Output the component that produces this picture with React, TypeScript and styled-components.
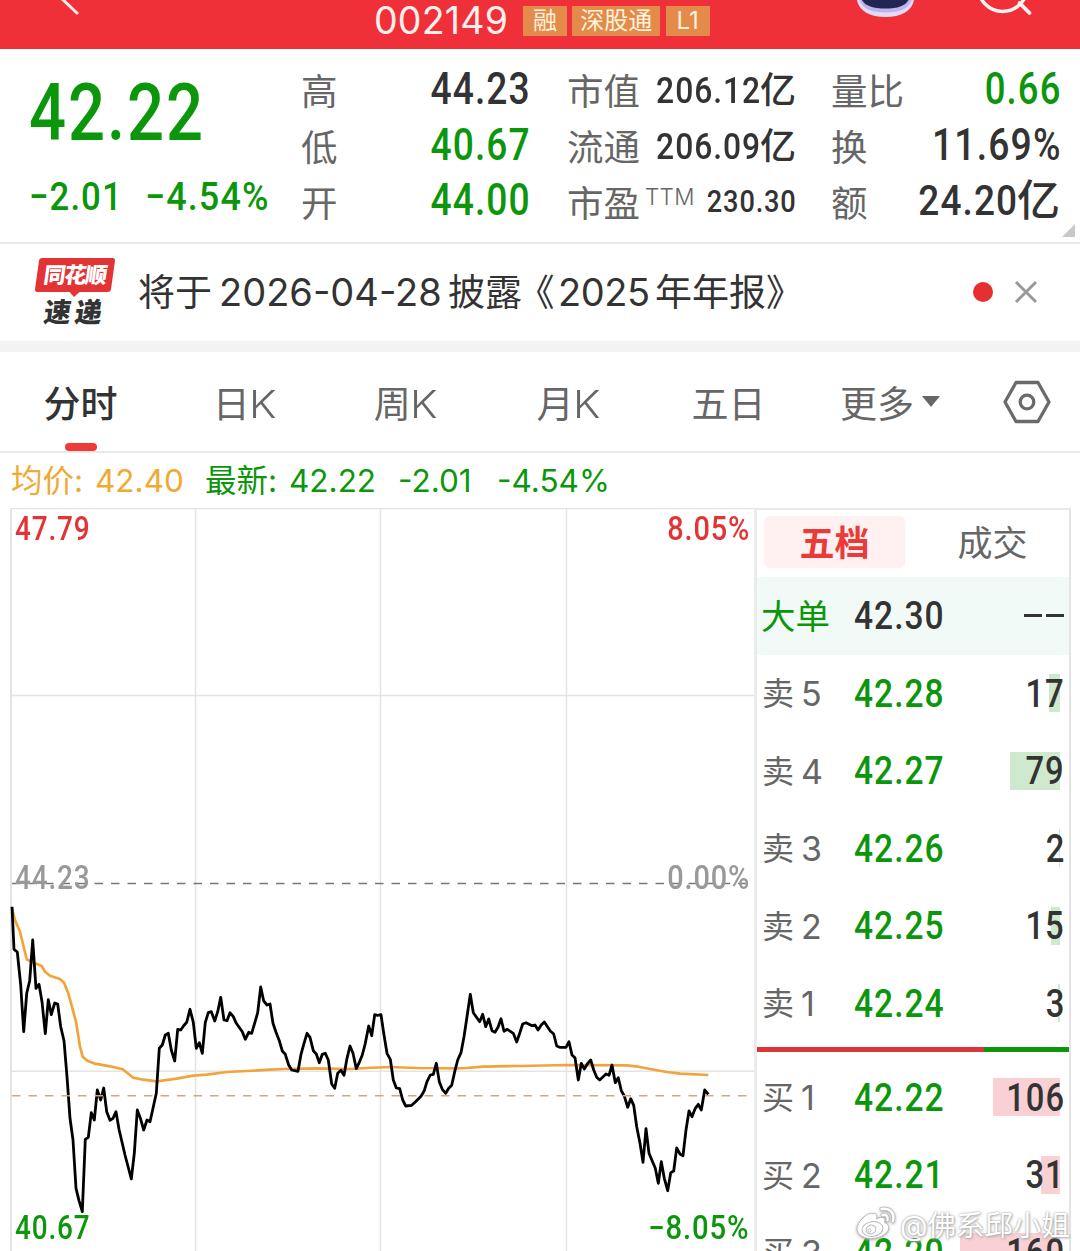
import React from "react";
import styled, { createGlobalStyle } from "styled-components";

const GREEN = "#0c960c";
const RED = "#e33335";
const INK = "#333";
const MUTED = "#666";
const LINE = "#e9e9e9";

const Global = createGlobalStyle`
  *, *::before, *::after { box-sizing: border-box; }
  html, body { margin: 0; background: #fff; }
  body { font-family: Inter, "Noto Sans CJK SC", sans-serif; color: ${INK}; }
`;

const Screen = styled.main`
  position: relative;
  width: 1080px;
  height: 1251px;
  overflow: hidden;
  display: flex;
  flex-direction: column;
  background: #fff;
`;

/* Narrow numerals used for prices and volumes */
const Num = styled.span<{ $size: number; $color?: string; $x?: number; $dy?: number; $origin?: string }>`
  display: inline-block;
  font-family: Roboto, "Noto Sans CJK SC", sans-serif;
  font-size: ${(p) => p.$size}px;
  font-weight: 500;
  line-height: 1;
  letter-spacing: 0.03em;
  margin-right: -0.03em;
  white-space: nowrap;
  color: ${(p) => p.$color ?? INK};
  transform: translateY(${(p) => p.$dy ?? 0}px) scaleX(${(p) => p.$x ?? 0.86});
  transform-origin: ${(p) => p.$origin ?? "right"} center;
`;

/* ---------- header ---------- */
const Header = styled.header`
  display: flex;
  height: 49px;
  flex: none;
  background: #ef3038;
`;
const BackSlot = styled.div`width: 374px; height: 49px;`;
const CodeGroup = styled.div`
  display: flex;
  align-items: center;
  width: 482px;
  height: 42px;
`;
const Code = styled.span`
  width: 149px;
  font-size: 37.5px;
  line-height: 40px;
  letter-spacing: 0.2px;
  margin-top: -1px;
  color: #fff0ee;
`;
const Tag = styled.span`
  display: flex;
  align-items: center;
  justify-content: center;
  min-width: 44px;
  height: 30px;
  margin-right: 5.3px;
  padding: 0 8px;
  font-size: 24px;
  line-height: 30px;
  color: #fff3dc;
  background: #e48a4a;
`;
const HeaderIcons = styled.div`display: flex; height: 49px; svg { display: block; }`;

/* ---------- quote ---------- */
const Quote = styled.section`
  display: grid;
  grid-template-columns: 272px 229px 37px 229px 35px 229px;
  height: 195px;
  flex: none;
  padding: 13px 0 0 29px;
  border-bottom: 2px solid ${LINE};
  position: relative;
`;
const PriceBox = styled.div`display: flex; flex-direction: column;`;
const PriceMain = styled.div`height: 101px; display: flex; align-items: center;`;
const PriceSub = styled.div`
  height: 64px;
  display: grid;
  grid-template-columns: 116px 1fr;
  align-items: center;
`;
const StatCol = styled.div`
  display: flex;
  flex-direction: column;
`;
const Stat = styled.div`
  display: flex;
  align-items: center;
  justify-content: space-between;
  height: 56px;
  white-space: nowrap;
`;
/* The scaled numerals leave slack in their own box, which the label may run into */
const StatLabel = styled.span`
  display: flex;
  padding-top: 3px;
  margin-right: -14px;
  font-size: 36.5px;
  line-height: 56px;
  color: ${MUTED};
`;
const Sup = styled.span`
  font-size: 22.5px;
  line-height: 42px;
  letter-spacing: 0.3px;
  margin-left: 5px;
  font-weight: 300;
`;
const StatValue = styled.span`display: flex; align-items: center;`;
const Unit = styled.span<{ $size: number; $dy?: number }>`
  font-size: ${(p) => p.$size}px;
  line-height: 56px;
  margin-top: ${(p) => p.$dy ?? 0}px;
  font-weight: 500;
`;
const Corner = styled.i`
  position: absolute;
  right: 5px;
  bottom: 5px;
  border-left: 13px solid transparent;
  border-bottom: 13px solid #c8c8c8;
`;

/* ---------- notice ---------- */
const Notice = styled.section`
  display: flex;
  align-items: center;
  height: 97px;
  flex: none;
  padding: 0 0 1px 34px;
`;
const Logo = styled.div`
  display: flex;
  flex-direction: column;
  align-items: center;
  width: 81px;
  height: 69px;
  margin-right: 23px;
`;
const LogoPlate = styled.div`
  position: relative;
  width: 76px;
  height: 34px;
  border-radius: 3px;
  background: ${RED};
  transform: skewX(-8deg);
  color: #fff;
  font-size: 22px;
  font-weight: 900;
  line-height: 35px;
  letter-spacing: -1.2px;
  text-align: center;
  &::after {
    content: "";
    position: absolute;
    left: 34px;
    top: 33px;
    border: 6px solid transparent;
    border-top-color: ${RED};
    border-bottom: 0;
  }
`;
const LogoWord = styled.div`
  margin-top: 7px;
  font-size: 27px;
  font-weight: 900;
  line-height: 27px;
  letter-spacing: 4px;
  transform: translateX(0) skewX(-8deg);
`;
const NoticeText = styled.div`
  display: flex;
  width: 835px;
  font-size: 37px;
  line-height: 50px;
  white-space: pre;
`;
const Digits = styled.span<{ $w: number; $ls: number }>`
  width: ${(p) => p.$w}px;
  font-size: 38px;
  letter-spacing: ${(p) => p.$ls}px;
`;
const Han = styled.span<{ $w: number }>`
  width: ${(p) => p.$w}px;
  padding-top: 1px;
`;
/* Half-width book-title marks */
const Mark = styled.span<{ $w: number; $pad: number }>`
  width: ${(p) => p.$w}px;
  padding-left: ${(p) => p.$pad}px;
  padding-top: 1px;
  font-feature-settings: "halt";
`;
const Dot = styled.i`
  width: 20px;
  height: 20px;
  border-radius: 50%;
  background: #e5302f;
  margin-right: 21px;
`;
const Band = styled.div`height: 11px; flex: none; background: #f3f3f3;`;

/* ---------- period tabs ---------- */
const Tabs = styled.nav`
  display: grid;
  grid-template-columns: 161px 164px 158px 168px 155px 168px 106px;
  height: 101px;
  flex: none;
  border-bottom: 2px solid ${LINE};
`;
const Tab = styled.div<{ $active?: boolean }>`
  display: flex;
  align-items: center;
  justify-content: center;
  position: relative;
  gap: 8px;
  height: 101px;
  padding-bottom: 2px;
  font-size: 37px;
  font-weight: ${(p) => (p.$active ? 500 : 400)};
  color: ${(p) => (p.$active ? INK : MUTED)};
`;
const Underline = styled.i`
  position: absolute;
  bottom: 2px;
  left: 65px;
  width: 32px;
  height: 8px;
  border-radius: 4px;
  background: #f03a36;
`;
const Kay = styled.span`
  display: inline-block;
  font-size: 38px;
  font-weight: 300;
  margin-left: -1px;
  transform: scaleX(1.12);
  transform-origin: left center;
`;
const Caret = styled.i`
  border: 9px solid transparent;
  border-top: 11px solid ${MUTED};
  border-bottom: 0;
`;

/* ---------- legend ---------- */
const Legend = styled.div`
  display: grid;
  grid-template-columns: 84px 110px 84px 109px 99px 1fr;
  align-items: center;
  height: 55px;
  flex: none;
  padding: 1px 0 0 11px;
  font-size: 31.5px;
  line-height: 54px;
  white-space: nowrap;
  color: ${GREEN};
`;
const Avg = styled.span`color: #eeaa33;`;

/* ---------- chart + order book ---------- */
const Body = styled.section`
  display: flex;
  height: 743px;
  flex: none;
  padding-left: 10px;
`;
const ChartBox = styled.div`
  position: relative;
  width: 744px;
  height: 743px;
  svg { display: block; }
`;
const ChartLabel = styled.div<{ $top: number; $right?: boolean }>`
  position: absolute;
  top: ${(p) => p.$top}px;
  ${(p) => (p.$right ? "right: 5px;" : "left: 5px;")}
  height: 34px;
  display: flex;
  align-items: center;
`;
const Book = styled.aside`
  width: 317px;
  border-top: 2px solid ${LINE};
  border-left: 3px solid #ebebeb;
  border-right: 2px solid #e4e4e4;
`;
const BookTabs = styled.div`
  display: grid;
  grid-template-columns: 141px 1fr;
  align-items: center;
  height: 67px;
  padding: 0 0 3px 7px;
  column-gap: 11px;
`;
const BookTab = styled.div<{ $active?: boolean }>`
  height: 52px;
  border-radius: 5px;
  text-align: center;
  font-size: 35px;
  line-height: 54px;
  font-weight: ${(p) => (p.$active ? 700 : 400)};
  color: ${(p) => (p.$active ? "#ea3b38" : MUTED)};
  background: ${(p) => (p.$active ? "#fff1f1" : "transparent")};
`;
const OrderRow = styled.div<{ $big?: boolean }>`
  display: grid;
  grid-template-columns: 91px 90px 1fr;
  align-items: center;
  height: 77.5px;
  padding: 0 5px 0 6px;
  background: ${(p) => (p.$big ? "#f1faf6" : "transparent")};
`;
const OrderLabel = styled.span`
  display: flex;
  gap: 7px;
  margin-left: -1px;
  padding-top: 2px;
  font-size: 32px;
  line-height: 60px;
  color: ${MUTED};
  white-space: nowrap;
`;
const Level = styled.span`font-size: 34px;`;
const BigLabel = styled.span`
  margin-left: -2px;
  padding-top: 2px;
  font-size: 34.5px;
  line-height: 60px;
  color: ${GREEN};
  white-space: nowrap;
`;
const Volume = styled.span`
  position: relative;
  display: flex;
  align-items: center;
  justify-content: flex-end;
  height: 38px;
`;
const VolumeBar = styled.i<{ $sell: boolean }>`
  position: absolute;
  right: 4px;
  top: 0;
  height: 38px;
  background: ${(p) => (p.$sell ? "#cfe9cf" : "#f9d1d4")};
`;
const Dashes = styled.span`
  display: flex;
  gap: 4px;
  i { width: 18px; height: 3px; background: ${INK}; }
`;
const Ratio = styled.div`
  display: flex;
  height: 5px;
  margin: 5px 0 6.5px;
  background: ${GREEN};
`;
const RatioBuy = styled.i`height: 5px; background: #d93437;`;

const Watermark = styled.div`
  position: absolute;
  left: 855px;
  top: 1203px;
  display: flex;
  align-items: center;
  gap: 3px;
  height: 40px;
  font-size: 28.5px;
  white-space: nowrap;
  color: #fff;
  text-shadow: 0 0 2px #999, 1px 1px 3px #aaa;
  svg { filter: drop-shadow(0 1px 1.5px #aaa); }
`;

type Pt = [number, number];
type Run = { dx: number; pts: Pt[] };

/* Samples are in thirds of a pixel, in three consecutive stretches of the session. */
const priceRuns: Run[] = [
  { dx: 0, pts: [[36,140],[42,268],[52,276],[62,375],[71,515],[80,400],[89,362],[98,240],[108,385],[117,373],[126,425],[136,521],[145,419],[154,464],[164,429],[173,432],[182,500],[192,542],[201,650],[210,775],[219,840],[228,985],[237,1022],[247,1055],[256,838],[265,832],[274,758],[283,780],[292,690],[302,720],[311,684],[320,755],[330,781],[339,775],[348,755],[357,808],[375,885],[394,957],[403,880],[412,750],[422,778],[431,810],[441,780],[450,785],[459,745],[469,700],[478,565],[487,555],[496,525],[505,520],[514,570],[524,603],[533,508],[542,510],[551,497],[560,487],[570,448],[580,487],[589,565],[598,548],[607,580],[616,487],[625,458],[634,455],[644,483],[653,455],[662,412],[672,480],[681,482],[690,458],[700,470],[709,490],[727,515],[736,538],[746,517],[755,520],[773,458],[782,381],[791,423],[801,435]] },
  { dx: 750, pts: [[60,432],[69,490],[78,517],[88,542],[97,573],[106,583],[116,615],[125,630],[144,634],[153,583],[162,550],[171,520],[180,532],[190,572],[199,582],[208,608],[217,583],[226,580],[235,600],[245,672],[254,685],[263,640],[273,631],[282,646],[291,595],[300,558],[309,580],[319,626],[328,607],[337,585],[346,550],[356,498],[365,527],[374,464],[383,466],[393,464],[402,525],[411,580],[421,598],[430,660],[439,684],[449,686],[458,720],[467,738],[485,736],[495,727],[513,709],[522,694],[531,665],[541,645],[550,643],[559,610],[568,665],[577,688],[587,700],[596,685],[605,676],[614,635],[623,600],[633,578],[642,530],[651,470],[661,403],[670,458],[689,485],[698,463],[707,500],[716,477],[726,512],[735,517],[744,502]] },
  { dx: 1500, pts: [[3,476],[12,514],[22,508],[40,520],[50,546],[59,520],[68,492],[78,488],[96,497],[105,495],[114,510],[124,495],[133,486],[151,513],[161,522],[170,558],[179,562],[198,562],[207,545],[216,585],[225,593],[235,660],[244,610],[253,627],[262,612],[272,600],[281,630],[290,652],[299,660],[318,642],[327,646],[336,615],[346,668],[355,653],[364,692],[373,708],[383,742],[392,716],[401,736],[410,800],[420,850],[429,907],[438,806],[447,880],[466,925],[475,970],[484,905],[493,955],[503,992],[512,938],[521,933],[530,864],[540,882],[549,887],[558,810],[567,753],[576,770],[586,745],[595,733],[604,750],[614,690],[625,703]] },
];
const averageRuns: Run[] = [
  { dx: 0, pts: [[36,145],[45,180],[60,215],[80,298],[95,306],[125,318],[135,335],[150,347],[180,357],[192,368],[205,400],[228,485],[240,560],[248,590],[262,602],[285,611],[330,619],[368,628],[400,653],[430,659],[470,664],[530,656],[580,647],[620,644],[680,636],[740,633],[810,629]] },
  { dx: 750, pts: [[100,627],[200,625],[300,627],[350,624],[420,621],[500,624],[620,625],[650,624],[700,620],[800,618]] },
  { dx: 1500, pts: [[60,618],[200,615],[380,616],[415,620],[450,627],[500,636],[540,641],[625,645]] },
];
const toPoints = (runs: Run[]) =>
  runs
    .flatMap((r) => r.pts.map(([x, y]) => `${((x + r.dx) / 3).toFixed(1)},${(860 + y / 3).toFixed(1)}`))
    .join(" ");

function Chart() {
  return (
    <ChartBox>
      <svg width="744" height="743" viewBox="10 508 744 743" fill="none">
        <g stroke="#e4e4e4" strokeWidth="1.5">
          <path d="M10 508.500H754" />
          <path d="M11 508V1251" strokeWidth="2" />
          <path d="M195.5 508V1251M380.5 508V1251M566.5 508V1251M11 695.5H754M11 1071.3H754" />
        </g>
        <path d="M12 883.5H753" stroke="#777" strokeWidth="1.5" strokeDasharray="8.5 8" />
        <polyline points={toPoints(averageRuns)} stroke="#f2a43a" strokeWidth="2.7" strokeLinejoin="round" />
        <polyline points={toPoints(priceRuns)} stroke="#000" strokeWidth="2.8" strokeLinejoin="round" />
        <path d="M12 1095.7H753" stroke="#cbaa88" strokeWidth="1.5" strokeDasharray="8.5 8" />
      </svg>
      <ChartLabel $top={4}><Num $size={32.5} $color={RED} $origin="left">47.79</Num></ChartLabel>
      <ChartLabel $top={4} $right><Num $size={32.5} $x={0.89} $color={RED}>8.05%</Num></ChartLabel>
      <ChartLabel $top={353}><Num $size={32.5} $color="#999" $origin="left">44.23</Num></ChartLabel>
      <ChartLabel $top={353} $right><Num $size={32.5} $x={0.89} $color="#999">0.00%</Num></ChartLabel>
      <ChartLabel $top={703}><Num $size={32.5} $color={GREEN} $origin="left">40.67</Num></ChartLabel>
      <ChartLabel $top={703} $right><Num $size={32.5} $x={0.9} $color={GREEN}>−8.05%</Num></ChartLabel>
    </ChartBox>
  );
}

type Order = { side: string; level: number; price: string; volume: string; bar: number };
const sells: Order[] = [
  { side: "卖", level: 5, price: "42.28", volume: "17", bar: 11 },
  { side: "卖", level: 4, price: "42.27", volume: "79", bar: 50 },
  { side: "卖", level: 3, price: "42.26", volume: "2", bar: 1 },
  { side: "卖", level: 2, price: "42.25", volume: "15", bar: 9 },
  { side: "卖", level: 1, price: "42.24", volume: "3", bar: 2 },
];
const buys: Order[] = [
  { side: "买", level: 1, price: "42.22", volume: "106", bar: 67 },
  { side: "买", level: 2, price: "42.21", volume: "31", bar: 19 },
  { side: "买", level: 3, price: "42.20", volume: "160", bar: 100 },
];

function OrderLine({ o }: { o: Order }) {
  return (
    <OrderRow>
      <OrderLabel>{o.side}<Level>{o.level}</Level></OrderLabel>
      <Num $size={39} $color={GREEN} $dy={1} $origin="left">{o.price}</Num>
      <Volume>
        <VolumeBar $sell={o.side === "卖"} style={{ width: o.bar }} />
        <Num $size={39} $x={0.84} $dy={1}>{o.volume}</Num>
      </Volume>
    </OrderRow>
  );
}

function WeiboMark() {
  return (
    <svg width="42" height="38" viewBox="0 0 42 38" fill="none">
      <path
        d="M17 10C20 8 23 10 21.500 15C27 12 31.500 13.500 29.500 18.500C34 20 35 24 32 28C27 35 12 37 5 31C-1 26 3 18 9 13C12 10.500 15 8.500 17 10Z"
        fill="#fff" stroke="#b9b9b9" strokeWidth="1"
      />
      <ellipse cx="17.500" cy="25" rx="10.500" ry="7.300" transform="rotate(-8 17.500 25)" stroke="#b9b9b9" strokeWidth="1" />
      <ellipse cx="16" cy="25.500" rx="5" ry="4.300" transform="rotate(-20 16 25.500)" fill="#fff" stroke="#b9b9b9" strokeWidth="1" />
      <circle cx="14.500" cy="26.500" r="1.600" stroke="#b9b9b9" strokeWidth="0.900" />
      <g strokeLinecap="round">
        <path d="M26.500 5C34.500 3.500 40 9 38 17M27.500 11C31 10 33.500 12.500 32.500 16" stroke="#b9b9b9" strokeWidth="4" />
        <path d="M26.500 5C34.500 3.500 40 9 38 17M27.500 11C31 10 33.500 12.500 32.500 16" stroke="#fff" strokeWidth="2.400" />
      </g>
    </svg>
  );
}

export default function App() {
  return (
    <Screen>
      <Global />
      <Header>
        <BackSlot>
          <svg width="100" height="30" viewBox="0 0 100 30">
            <path d="M60 -3L78 14" stroke="#ffe9e6" strokeWidth="3" />
          </svg>
        </BackSlot>
        <CodeGroup>
          <Code>002149</Code>
          <Tag>融</Tag>
          <Tag>深股通</Tag>
          <Tag>L1</Tag>
        </CodeGroup>
        <HeaderIcons>
          <svg width="224" height="30" viewBox="856 0 224 30" fill="none">
            <path d="M856.500 -4C857 10 868 17 885.500 17S914 10 914.500 -4Z" fill="#e6d9f8" />
            <path d="M858.500 -4C860 8 870 12.500 885.500 12.500S911 8 912.500 -4Z" fill="#b9b6ec" />
            <path d="M860.500 -4C862 5 871 8.500 885.500 8.500S908 5 910 -4Z" fill="#222553" />
            <circle cx="1002.700" cy="-13" r="24.500" stroke="#fff3f1" strokeWidth="3.500" />
            <path d="M1019.500 3L1029.500 13" stroke="#fff3f1" strokeWidth="3.800" strokeLinecap="round" />
          </svg>
        </HeaderIcons>
      </Header>

      <Quote>
        <PriceBox>
          <PriceMain><Num $size={79} $color={GREEN} $x={0.825} $dy={1} $origin="left">42.22</Num></PriceMain>
          <PriceSub>
            <Num $size={39.5} $color={GREEN} $dy={1.5} $x={0.88} $origin="left">−2.01</Num>
            <Num $size={39.5} $color={GREEN} $dy={1.5} $x={0.91} $origin="left">−4.54%</Num>
          </PriceSub>
        </PriceBox>
        <StatCol>
          <Stat><StatLabel>高</StatLabel><Num $size={44} $x={0.845} $dy={-1}>44.23</Num></Stat>
          <Stat><StatLabel>低</StatLabel><Num $size={44} $x={0.845} $dy={-1} $color={GREEN}>40.67</Num></Stat>
          <Stat><StatLabel>开</StatLabel><Num $size={44} $x={0.845} $dy={-2} $color={GREEN}>44.00</Num></Stat>
        </StatCol>
        <span />
        <StatCol>
          <Stat><StatLabel>市值</StatLabel><StatValue><Num $size={37} $x={0.86}>206.12</Num><Unit $size={36}>亿</Unit></StatValue></Stat>
          <Stat><StatLabel>流通</StatLabel><StatValue><Num $size={37} $x={0.86}>206.09</Num><Unit $size={36}>亿</Unit></StatValue></Stat>
          <Stat><StatLabel>市盈<Sup>TTM</Sup></StatLabel><StatValue><Num $size={32} $x={0.85} $dy={-1.5}>230.30</Num></StatValue></Stat>
        </StatCol>
        <span />
        <StatCol>
          <Stat><StatLabel>量比</StatLabel><Num $size={44} $x={0.83} $dy={-1} $color={GREEN}>0.66</Num></Stat>
          <Stat><StatLabel>换</StatLabel><Num $size={44} $x={0.85} $dy={-1}>11.69%</Num></Stat>
          <Stat><StatLabel>额</StatLabel><StatValue><Num $size={43} $x={0.86} $dy={-2.5}>24.20</Num><Unit $size={43} $dy={-5}>亿</Unit></StatValue></Stat>
        </StatCol>
        <Corner />
      </Quote>

      <Notice>
        <Logo>
          <LogoPlate>同花顺</LogoPlate>
          <LogoWord>速递</LogoWord>
        </Logo>
        <NoticeText>
          <Han $w={81}>将于</Han>
          <Digits $w={229} $ls={0}>2026-04-28</Digits>
          <Han $w={75}>披露</Han>
          <Mark $w={35} $pad={13}>《</Mark>
          <Digits $w={97} $ls={-0.4}>2025</Digits>
          <Han $w={111}>年年报</Han>
          <Mark $w={38} $pad={0}>》</Mark>
        </NoticeText>
        <Dot />
        <svg width="24" height="24" viewBox="0 0 24 24">
          <path d="M2 2L22 22M22 2L2 22" stroke="#999" strokeWidth="3" />
        </svg>
      </Notice>
      <Band />

      <Tabs>
        <Tab $active>分时<Underline /></Tab>
        <Tab><span>日<Kay>K</Kay></span></Tab>
        <Tab><span>周<Kay>K</Kay></span></Tab>
        <Tab><span>月<Kay>K</Kay></span></Tab>
        <Tab>五日</Tab>
        <Tab>更多<Caret /></Tab>
        <Tab>
          <svg width="48" height="44" viewBox="0 0 48 44" fill="none" stroke="#6a6a6a" strokeWidth="3.300" strokeLinejoin="round">
            <path d="M13 2.500H35L46 22L35 41.500H13L2 22Z" />
            <circle cx="24" cy="22" r="6.800" />
          </svg>
        </Tab>
      </Tabs>

      <Legend>
        <Avg>均价:</Avg><Avg>42.40</Avg>
        <span>最新:</span><span>42.22</span><span>-2.01</span><span>-4.54%</span>
      </Legend>

      <Body>
        <Chart />
        <Book>
          <BookTabs>
            <BookTab $active>五档</BookTab>
            <BookTab>成交</BookTab>
          </BookTabs>
          <OrderRow $big>
            <BigLabel>大单</BigLabel>
            <Num $size={39} $dy={1} $origin="left">42.30</Num>
            <Volume><Dashes><i /><i /></Dashes></Volume>
          </OrderRow>
          {sells.map((o) => <OrderLine key={o.level} o={o} />)}
          <Ratio><RatioBuy style={{ width: "72.8%" }} /></Ratio>
          {buys.map((o) => <OrderLine key={o.level} o={o} />)}
        </Book>
      </Body>

      <Watermark><WeiboMark />@佛系邱小姐</Watermark>
    </Screen>
  );
}
